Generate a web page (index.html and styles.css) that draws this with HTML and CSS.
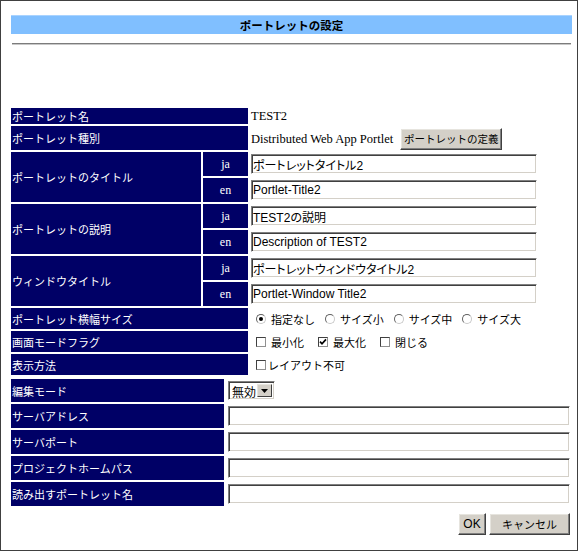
FILE: index.html
```html
<!DOCTYPE html>
<html lang="ja">
<head>
<meta charset="utf-8">
<title>ポートレットの設定</title>
<link rel="stylesheet" href="styles.css">
</head>
<body>
<div class="frame">
  <div class="titlebar">ポートレットの設定</div>
  <div class="rule"></div>

  <div class="grid1">
    <div class="lab wide">ポートレット名</div>
    <div class="val serif">TEST2</div>

    <div class="lab wide">ポートレット種別</div>
    <div class="val serif kind"><span>Distributed Web App Portlet</span><button class="btn def">ポートレットの定義</button></div>

    <div class="lab tall">ポートレットのタイトル</div>
    <div class="sub">ja</div>
    <div class="val"><input class="field ja" value="ポートレットタイトル2"></div>
    <div class="sub">en</div>
    <div class="val"><input class="field" value="Portlet-Title2"></div>

    <div class="lab tall">ポートレットの説明</div>
    <div class="sub">ja</div>
    <div class="val"><input class="field ja" value="TEST2の説明"></div>
    <div class="sub">en</div>
    <div class="val"><input class="field" value="Description of TEST2"></div>

    <div class="lab tall">ウィンドウタイトル</div>
    <div class="sub">ja</div>
    <div class="val"><input class="field ja" value="ポートレットウィンドウタイトル2"></div>
    <div class="sub">en</div>
    <div class="val"><input class="field" value="Portlet-Window Title2"></div>

    <div class="lab wide">ポートレット横幅サイズ</div>
    <div class="val opts radios">
      <span class="opt"><span class="radio on"></span>指定なし</span>
      <span class="opt"><span class="radio"></span>サイズ小</span>
      <span class="opt"><span class="radio"></span>サイズ中</span>
      <span class="opt"><span class="radio"></span>サイズ大</span>
    </div>

    <div class="lab wide">画面モードフラグ</div>
    <div class="val opts checks">
      <span class="opt"><span class="check"></span>最小化</span>
      <span class="opt"><span class="check"><svg width="8" height="8" viewBox="0 0 8 8"><path d="M1 3.6 L3 5.8 L7 1.4" stroke="#000" stroke-width="1.7" fill="none"/></svg></span>最大化</span>
      <span class="opt"><span class="check"></span>閉じる</span>
    </div>

    <div class="lab wide">表示方法</div>
    <div class="val opts">
      <span class="opt tight"><span class="check"></span>レイアウト不可</span>
    </div>
  </div>

  <div class="grid2">
    <div class="lab">編集モード</div>
    <div class="val">
      <div class="select"><span class="sel-text">無効</span><span class="sel-arrow"><svg width="7" height="4" viewBox="0 0 7 4"><path d="M0 0 H7 L3.5 4 Z" fill="#000"/></svg></span></div>
    </div>

    <div class="lab">サーバアドレス</div>
    <div class="val"><input class="field wide2" value=""></div>

    <div class="lab">サーバポート</div>
    <div class="val"><input class="field wide2" value=""></div>

    <div class="lab">プロジェクトホームパス</div>
    <div class="val"><input class="field wide2" value=""></div>

    <div class="lab">読み出すポートレット名</div>
    <div class="val"><input class="field wide2" value=""></div>
  </div>

  <div class="actions">
    <button class="btn ok">OK</button>
    <button class="btn cancel">キャンセル</button>
  </div>
</div>
</body>
</html>
```

FILE: styles.css
```css
* {
  box-sizing: border-box;
}

html,
body {
  margin: 0;
  padding: 0;
  background: #ffffff;
}

body {
  font-family: "Noto Sans CJK JP", "Liberation Sans", sans-serif;
  font-size: 11px;
  color: #000000;
}

.frame {
  width: 578px;
  height: 551px;
  border: 1px solid #404040;
  padding: 14px 5px 0 10px;
}

.titlebar {
  height: 19px;
  background: #80bfff;
  border-top: 1px solid #a9d3ff;
  text-align: center;
  font-weight: bold;
  font-size: 11.5px;
  line-height: 18px;
}

.rule {
  margin: 9px 1px 0;
  border-top: 1px solid #7c7c7c;
  border-bottom: 1px solid #c8c8c8;
}

.grid1 {
  display: grid;
  grid-template-columns: 190px 45px 287px;
  grid-template-rows: 16px 24px repeat(6, 24px) repeat(3, 21px);
  gap: 2px;
  width: 526px;
  margin-top: 63px;
}

.grid2 {
  display: grid;
  grid-template-columns: 213px 344px;
  grid-template-rows: 23px repeat(4, 24px);
  gap: 2px;
  width: 559px;
  margin-top: 4px;
}

.lab {
  background: #000066;
  color: #ffffff;
  display: flex;
  align-items: center;
  padding-left: 1px;
  white-space: nowrap;
}

.grid1 .lab {
  grid-column: 1 / 3;
}

.grid1 .lab.tall {
  grid-column: 1;
  grid-row: span 2;
}

.grid2 .lab {
  grid-column: 1;
}

.sub {
  grid-column: 2;
  background: #000066;
  color: #ffffff;
  display: flex;
  align-items: center;
  justify-content: center;
  font-family: "Liberation Serif", serif;
  font-size: 12px;
}

.val {
  display: flex;
  align-items: center;
  white-space: nowrap;
}

.grid1 .val {
  grid-column: 3;
}

.grid2 .val {
  grid-column: 2;
}

.serif {
  font-family: "Liberation Serif", serif;
  font-size: 12.5px;
  padding-left: 1px;
}

.kind {
  flex-wrap: wrap;
  align-items: baseline;
  align-content: flex-end;
}

.field {
  width: 286px;
  height: 20px;
  margin: 0 0 0 1px;
  padding: 0 1px;
  border: 1px solid;
  border-color: #808080 #ffffff #ffffff #808080;
  box-shadow: inset 1px 1px 0 #404040, inset -1px -1px 0 #d4d0c8;
  background: #ffffff;
  color: #000000;
  font-family: "Liberation Sans", "Noto Sans CJK JP", sans-serif;
  font-size: 12px;
  outline: none;
}

.field.ja {
  font-feature-settings: "palt";
}

.field.wide2 {
  width: 342px;
  margin-left: 2px;
}

.btn {
  background: #d4d0c8;
  border: 1px solid;
  border-color: #ffffff #404040 #404040 #ffffff;
  box-shadow: inset -1px -1px 0 #808080, inset 1px 1px 0 #e6e4de;
  height: 22px;
  padding: 0;
  color: #000000;
  font-family: "Noto Sans CJK JP", sans-serif;
  font-size: 11px;
  line-height: 18px;
  white-space: nowrap;
}

.btn.def {
  width: 102px;
  margin-left: 7px;
  font-size: 10.5px;
}

.btn.ok {
  width: 28px;
  font-family: "Liberation Sans", sans-serif;
  font-size: 12px;
}

.btn.cancel {
  width: 81px;
}

.opts {
  padding-left: 6px;
}

.radios {
  gap: 10px;
}

.checks {
  gap: 14px;
}

.opt {
  display: inline-flex;
  align-items: center;
  gap: 5px;
}

.opt.tight {
  gap: 2px;
}

.radio {
  width: 10px;
  height: 10px;
  border-radius: 50%;
  border: 1px solid;
  border-color: #606060 #c8c8c8 #c8c8c8 #606060;
  background: #ffffff;
  display: inline-flex;
  align-items: center;
  justify-content: center;
}

.radio.on::after {
  content: "";
  width: 4px;
  height: 4px;
  border-radius: 50%;
  background: #000000;
}

.check {
  width: 10px;
  height: 10px;
  border: 1px solid;
  border-color: #404040 #909090 #909090 #404040;
  background: #ffffff;
  display: inline-flex;
  align-items: center;
  justify-content: center;
}

.check svg {
  display: block;
}

.select {
  margin-left: 2px;
  width: 47px;
  height: 19px;
  display: flex;
  align-items: stretch;
  padding: 2px;
  border: 1px solid;
  border-color: #808080 #ffffff #ffffff #808080;
  box-shadow: inset 1px 1px 0 #404040, inset -1px -1px 0 #d4d0c8;
  background: #ffffff;
}

.sel-text {
  flex: 1;
  font-size: 12px;
  line-height: 15px;
  padding-left: 1px;
}

.sel-arrow {
  width: 15px;
  background: #d4d0c8;
  border: 1px solid;
  border-color: #e6e4de #404040 #404040 #e6e4de;
  display: flex;
  align-items: center;
  justify-content: center;
}

.sel-arrow svg {
  display: block;
}

.actions {
  display: flex;
  justify-content: flex-end;
  gap: 3px;
  width: 559px;
  margin-top: 7px;
}
```
